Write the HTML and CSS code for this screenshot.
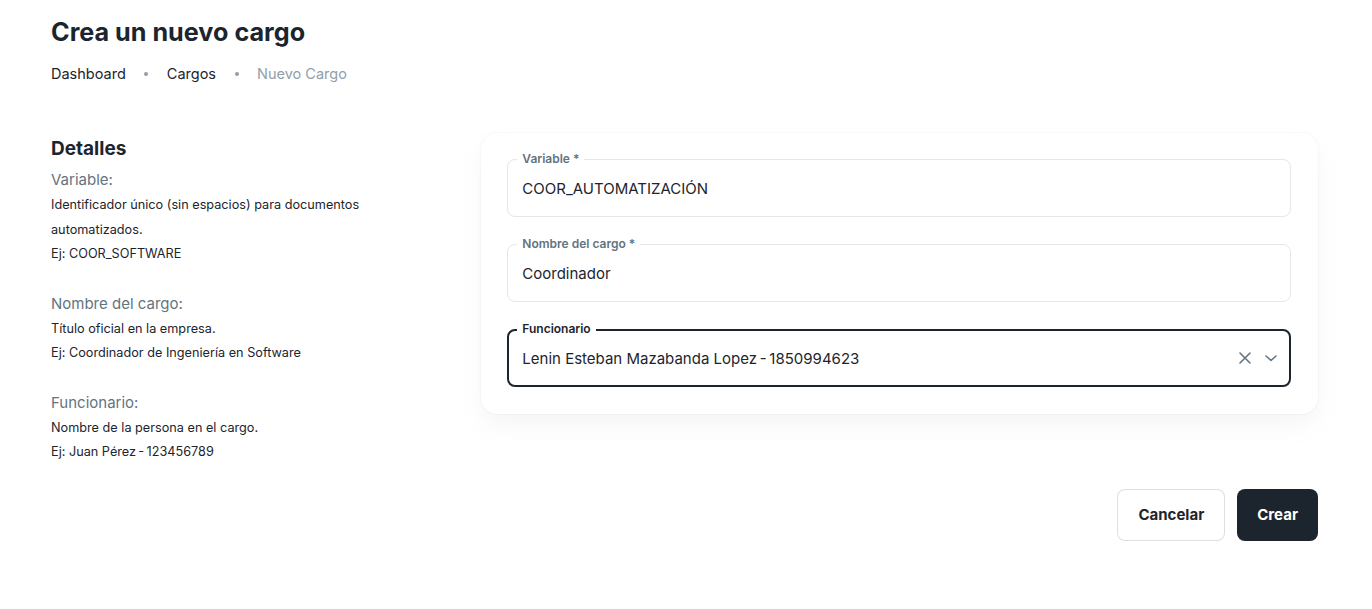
FILE: index.html
```html
<!DOCTYPE html>
<html lang="es">
<head>
<meta charset="utf-8">
<title>Crea un nuevo cargo</title>
<link rel="stylesheet" href="styles.css">
</head>
<body>
<main class="page">
  <h1 class="title">Crea un nuevo cargo</h1>
  <nav class="crumbs">
    <span class="crumb">Dashboard</span>
    <span class="dot"></span>
    <span class="crumb">Cargos</span>
    <span class="dot"></span>
    <span class="crumb current">Nuevo Cargo</span>
  </nav>

  <section class="grid">
    <div class="details">
      <h2 class="details-title">Detalles</h2>
      <div class="group">
        <div class="g-label">Variable:</div>
        <p class="g-text">Identificador único (sin espacios) para documentos automatizados.</p>
        <p class="g-text">Ej: COOR_SOFTWARE</p>
      </div>
      <div class="group">
        <div class="g-label">Nombre del cargo:</div>
        <p class="g-text">Título oficial en la empresa.</p>
        <p class="g-text">Ej: Coordinador de Ingeniería en Software</p>
      </div>
      <div class="group">
        <div class="g-label">Funcionario:</div>
        <p class="g-text">Nombre de la persona en el cargo.</p>
        <p class="g-text">Ej: Juan Pérez&thinsp;-&thinsp;123456789</p>
      </div>
    </div>

    <div class="card">
      <div class="field">
        <span class="f-label">Variable *</span>
        <span class="f-value">COOR_AUTOMATIZACIÓN</span>
      </div>
      <div class="field">
        <span class="f-label">Nombre del cargo *</span>
        <span class="f-value">Coordinador</span>
      </div>
      <div class="field focused">
        <span class="f-label">Funcionario</span>
        <span class="f-value">Lenin Esteban Mazabanda Lopez&thinsp;-&thinsp;1850994623</span>
        <span class="f-icons">
          <svg class="ico-x" width="14" height="14" viewBox="0 0 14 14" fill="none" stroke="#637381" stroke-width="1.6" stroke-linecap="round"><path d="M2 2 L12 12 M12 2 L2 12"/></svg>
          <svg class="ico-chev" width="14" height="14" viewBox="0 0 14 14" fill="none" stroke="#637381" stroke-width="1.6" stroke-linecap="round" stroke-linejoin="round"><path d="M2 5 L7 9.5 L12 5"/></svg>
        </span>
      </div>
    </div>
  </section>

  <div class="actions">
    <button class="btn btn-outline">Cancelar</button>
    <button class="btn btn-dark">Crear</button>
  </div>
</main>
</body>
</html>
```

FILE: styles.css
```css
* { box-sizing: border-box; }
html, body { margin: 0; padding: 0; background: #fff; }
body {
  font-family: "Inter", "Noto Sans", "Liberation Sans", sans-serif;
  color: #1C252E;
}
.page {
  padding: 14px 54px 0 51px;
}
.title {
  margin: 0;
  font-size: 25.2px;
  line-height: 36px;
  font-weight: 700;
  color: #1C252E;
}
.crumbs {
  margin-top: 13px;
  display: flex;
  align-items: center;
  gap: 18.5px;
  font-size: 14.5px;
  line-height: 22px;
}
.crumb { color: #1C252E; }
.crumb.current { color: #919EAB; }
.dot {
  width: 4px; height: 4px; border-radius: 50%;
  background: #919EAB;
}
.grid {
  margin-top: 48px;
  display: grid;
  grid-template-columns: calc((100% + 24px) / 3 - 24px) 1fr;
  column-gap: 24px;
  align-items: start;
}
.details-title {
  margin: 2px 0 0;
  font-size: 19px;
  line-height: 28px;
  font-weight: 700;
}
.group { margin-top: 26px; }
.group:first-of-type { margin-top: 6px; }
.g-label {
  font-size: 15px;
  line-height: 22px;
  color: #637381;
  margin-bottom: 2px;
}
.g-text {
  margin: 0;
  font-size: 12.7px;
  line-height: 24.5px;
  color: #1C252E;
  max-width: 320px;
}
.card {
  background: #fff;
  border-radius: 16px;
  box-shadow: 0 0 2px 0 rgba(145,158,171,0.2), 0 12px 24px -4px rgba(145,158,171,0.12);
  padding: 26px 27px 27px 26px;
  display: flex;
  flex-direction: column;
  gap: 27px;
}
.field {
  position: relative;
  height: 58px;
  border: 1px solid rgba(145,158,171,0.25);
  border-radius: 8px;
  display: flex;
  align-items: center;
  padding: 0 12px 0 14px;
}
.f-label {
  position: absolute;
  top: -9px;
  left: 9px;
  padding: 0 5px;
  background: #fff;
  font-size: 12px;
  line-height: 16px;
  font-weight: 600;
  color: #637381;
}
.f-value {
  font-size: 15px;
  color: #1C252E;
  flex: 1;
}
.field.focused {
  border: 2px solid #1C252E;
  padding: 0 11px 0 13px;
}
.field.focused .f-label {
  color: #1C252E;
  top: -10px;
  left: 8px;
}
.f-icons {
  display: flex;
  align-items: center;
  gap: 12px;
}
.actions {
  margin-top: 24px;
  display: flex;
  justify-content: flex-end;
  gap: 12px;
}
.btn {
  height: 52px;
  border-radius: 8px;
  font-family: inherit;
  font-size: 15px;
  font-weight: 700;
  padding: 0 20px;
  cursor: pointer;
}
.btn-outline {
  background: #fff;
  color: #1C252E;
  border: 1px solid rgba(145,158,171,0.32);
}
.btn-dark {
  background: #1C252E;
  color: #fff;
  border: none;
}
```
